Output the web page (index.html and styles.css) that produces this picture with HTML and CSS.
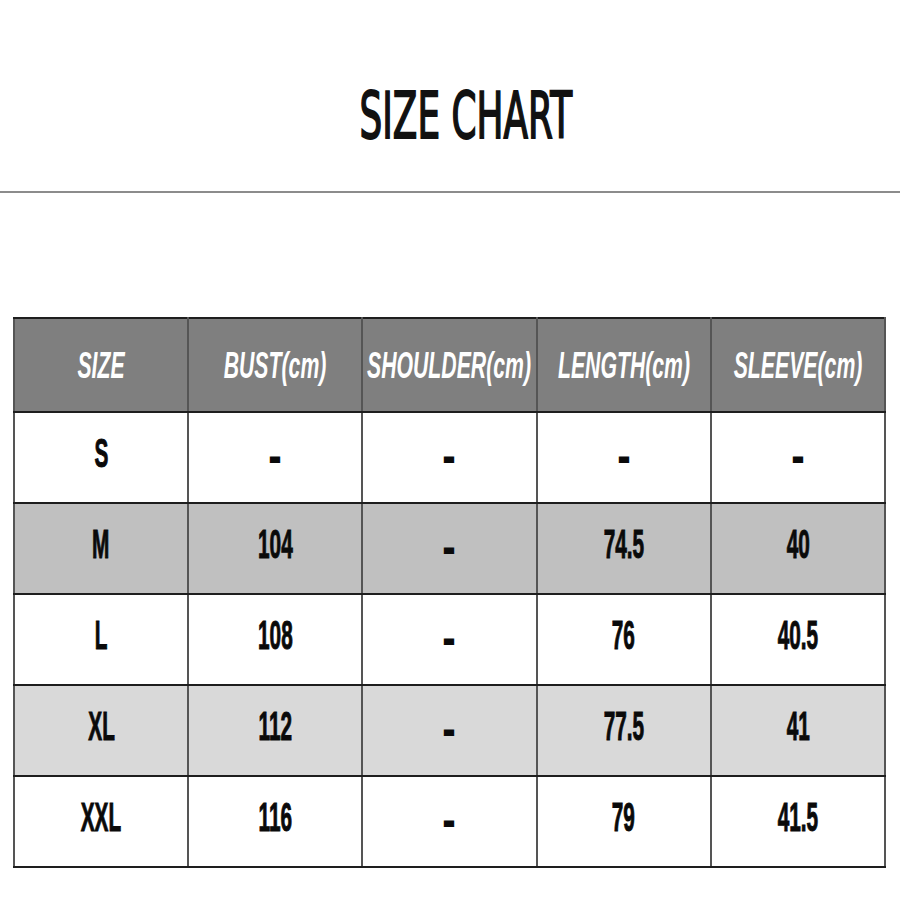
FILE: index.html
```html
<!DOCTYPE html>
<html lang="en">
<head>
<meta charset="utf-8">
<title>Size Chart</title>
<link rel="stylesheet" href="styles.css">
</head>
<body>
<header class="title-wrap">
  <h1 class="title"><span class="title-text">SIZE CHART</span></h1>
</header>
<div class="rule"></div>
<main class="chart-wrap">
  <table class="chart">
    <thead>
      <tr class="head-row">
        <th><div class="box"><span class="hcell">SIZE</span></div></th>
        <th><div class="box"><span class="hcell">BUST(cm)</span></div></th>
        <th><div class="box"><span class="hcell">SHOULDER(cm)</span></div></th>
        <th><div class="box"><span class="hcell">LENGTH(cm)</span></div></th>
        <th><div class="box"><span class="hcell">SLEEVE(cm)</span></div></th>
      </tr>
    </thead>
    <tbody>
      <tr class="row row-white">
        <td><div class="box"><span class="cell">S</span></div></td>
        <td><div class="box"><span class="dash">-</span></div></td>
        <td><div class="box"><span class="dash">-</span></div></td>
        <td><div class="box"><span class="dash">-</span></div></td>
        <td><div class="box"><span class="dash">-</span></div></td>
      </tr>
      <tr class="row row-dark">
        <td><div class="box"><span class="cell">M</span></div></td>
        <td><div class="box"><span class="cell">104</span></div></td>
        <td><div class="box"><span class="dash">-</span></div></td>
        <td><div class="box"><span class="cell">74.5</span></div></td>
        <td><div class="box"><span class="cell">40</span></div></td>
      </tr>
      <tr class="row row-white">
        <td><div class="box"><span class="cell">L</span></div></td>
        <td><div class="box"><span class="cell">108</span></div></td>
        <td><div class="box"><span class="dash">-</span></div></td>
        <td><div class="box"><span class="cell">76</span></div></td>
        <td><div class="box"><span class="cell">40.5</span></div></td>
      </tr>
      <tr class="row row-light">
        <td><div class="box"><span class="cell">XL</span></div></td>
        <td><div class="box"><span class="cell">112</span></div></td>
        <td><div class="box"><span class="dash">-</span></div></td>
        <td><div class="box"><span class="cell">77.5</span></div></td>
        <td><div class="box"><span class="cell">41</span></div></td>
      </tr>
      <tr class="row row-white">
        <td><div class="box"><span class="cell">XXL</span></div></td>
        <td><div class="box"><span class="cell">116</span></div></td>
        <td><div class="box"><span class="dash">-</span></div></td>
        <td><div class="box"><span class="cell">79</span></div></td>
        <td><div class="box"><span class="cell">41.5</span></div></td>
      </tr>
    </tbody>
  </table>
</main>
</body>
</html>
```
FILE: styles.css
```css
html, body {
  margin: 0;
  padding: 0;
  background: #ffffff;
}

body {
  width: 900px;
  height: 900px;
  overflow: hidden;
  font-family: "Liberation Sans", Arial, sans-serif;
}

.title-wrap {
  height: 191px;
  box-sizing: border-box;
  padding-top: 41px;
  padding-left: 32px;
  display: flex;
  align-items: center;
  justify-content: center;
}

.title {
  margin: 0;
  font-family: "DejaVu Sans", sans-serif;
  font-weight: normal;
  font-size: 64px;
  line-height: normal;
  color: #111111;
}

.title-text {
  display: inline-block;
  transform: scaleX(0.56);
  -webkit-text-stroke: 2px #111111;
}

.rule {
  height: 2px;
  background: #8c8c8c;
}

.chart-wrap {
  padding-top: 124px;
  padding-left: 13px;
}

.chart {
  width: 873px;
  border-collapse: collapse;
  table-layout: fixed;
}

.chart th,
.chart td {
  width: 20%;
  padding: 0;
  text-align: center;
  vertical-align: middle;
  border-left: 2px solid #555555;
  border-right: 2px solid #555555;
  border-top: 2px solid #1e1e1e;
  border-bottom: 2px solid #1e1e1e;
  white-space: nowrap;
}

.box {
  display: flex;
  justify-content: center;
  align-items: center;
  width: 100%;
}

.head-row {
  height: 94px;
  background: #7f7f7f;
}

.hcell {
  flex: none;
  display: block;
  font-weight: bold;
  font-style: italic;
  font-size: 36px;
  color: #ffffff;
  transform: scaleX(0.59);
  position: relative;
  top: 1px;
}

.row {
  height: 91px;
}

.row-white { background: #ffffff; }
.row-dark { background: #c0c0c0; }
.row-light { background: #d9d9d9; }

.cell {
  flex: none;
  display: block;
  font-weight: bold;
  font-size: 40px;
  color: #0a0a0a;
  transform: scaleX(0.52);
  -webkit-text-stroke: 1px #0a0a0a;
  position: relative;
  top: -4px;
}

.dash {
  flex: none;
  display: block;
  font-weight: bold;
  font-size: 54px;
  color: #0a0a0a;
  transform: scaleX(0.75);
  position: relative;
  top: -3px;
}
```
